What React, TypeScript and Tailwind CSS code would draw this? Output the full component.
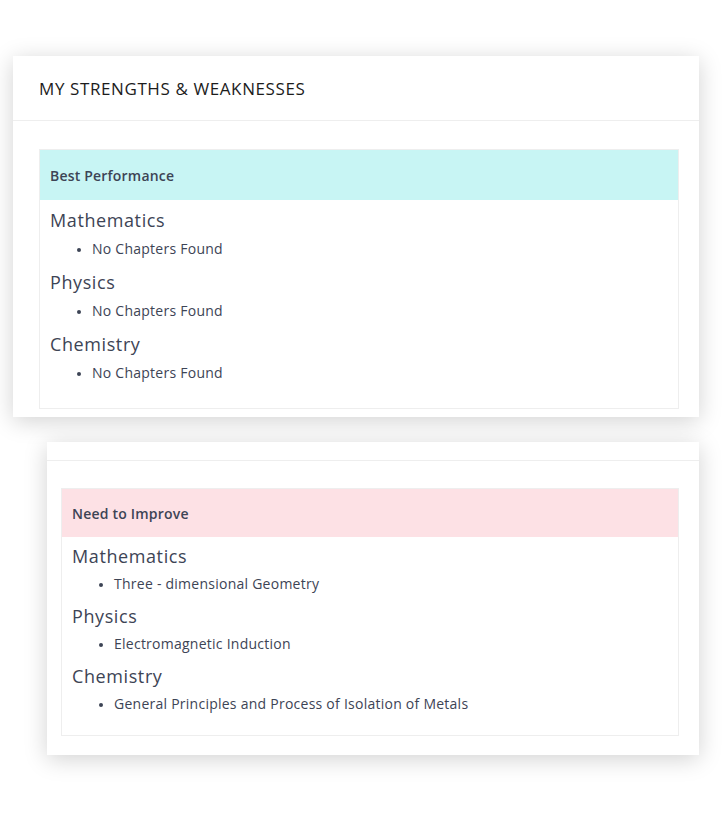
const font = { fontFamily: '"Open Sans", "Liberation Sans", sans-serif' };

type Subject = { name: string; chapters: string[] };

const best: Subject[] = [
  { name: 'Mathematics', chapters: ['No Chapters Found'] },
  { name: 'Physics', chapters: ['No Chapters Found'] },
  { name: 'Chemistry', chapters: ['No Chapters Found'] },
];

const improve: Subject[] = [
  { name: 'Mathematics', chapters: ['Three - dimensional Geometry'] },
  { name: 'Physics', chapters: ['Electromagnetic Induction'] },
  { name: 'Chemistry', chapters: ['General Principles and Process of Isolation of Metals'] },
];

function SubjectList({ items, gap, itemGap }: { items: Subject[]; gap: string; itemGap: string }) {
  return (
    <div className={`flex flex-col ${gap}`}>
      {items.map((s) => (
        <div key={s.name}>
          <h4 className="text-[18px] leading-[27px] tracking-[0.6px] text-[#3d4455]">{s.name}</h4>
          <ul
            className={`${itemGap} list-disc pl-[42px] text-[14px] leading-[21px] tracking-[0.25px] text-[#3d4455] marker:text-[11px]`}
          >
            {s.chapters.map((c) => (
              <li key={c}>{c}</li>
            ))}
          </ul>
        </div>
      ))}
    </div>
  );
}

export default function App() {
  return (
    <div className="min-h-[826px] bg-white pt-[56px] pr-[25px]" style={font}>
      <div className="ml-[13px] bg-white shadow-[0_4px_22px_rgba(0,0,0,0.18)]">
        <div className="flex h-[65px] items-center border-b border-[#eeeeee] px-[26px]">
          <h3 className="pt-[1px] text-[17px] font-medium tracking-[0.6px] text-[#1c1c1c]">
            MY STRENGTHS &amp; WEAKNESSES
          </h3>
        </div>
        <div className="pt-[28px] pr-[20px] pb-[8px] pl-[26px]">
          <div className="border border-[#eeeeee]">
            <div className="flex h-[50px] items-center bg-[#c8f5f4] px-[10px]">
              <span className="text-[14px] font-semibold tracking-[0.2px] text-[#3d4455]">
                Best Performance
              </span>
            </div>
            <div className="px-[10px] pt-[7px] pb-[25px]">
              <SubjectList items={best} gap="gap-[10px]" itemGap="mt-[4px]" />
            </div>
          </div>
        </div>
      </div>

      <div className="mt-[25px] ml-[47px] bg-white shadow-[0_4px_22px_rgba(0,0,0,0.18)]">
        <div className="h-[19px] border-b border-[#eeeeee]" />
        <div className="pt-[27px] pr-[20px] pb-[19px] pl-[14px]">
          <div className="border border-[#eeeeee]">
            <div className="flex h-[48px] items-center bg-[#fde1e5] px-[10px]">
              <span className="text-[14px] font-semibold tracking-[0.2px] text-[#3d4455]">
                Need to Improve
              </span>
            </div>
            <div className="px-[10px] pt-[6px] pb-[21px]">
              <SubjectList items={improve} gap="gap-[9px]" itemGap="mt-[3px]" />
            </div>
          </div>
        </div>
      </div>
    </div>
  );
}
